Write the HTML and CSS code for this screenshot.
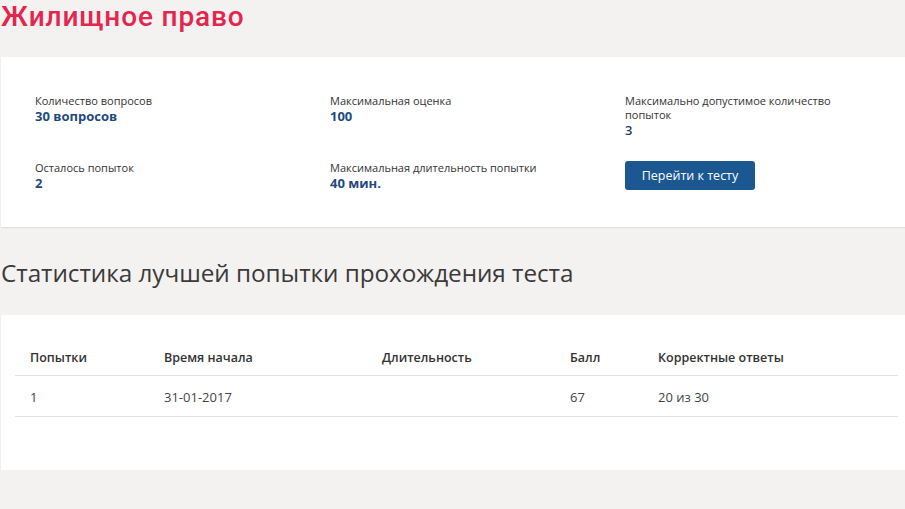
FILE: index.html
```html
<!DOCTYPE html>
<html lang="ru">
<head>
<meta charset="utf-8">
<title>Жилищное право</title>
<link rel="stylesheet" href="styles.css">
</head>
<body>
<h1 class="title">Жилищное право</h1>
<section class="card info">
  <div class="grid">
    <div class="item"><div class="label">Количество вопросов</div><div class="value">30 вопросов</div></div>
    <div class="item"><div class="label">Максимальная оценка</div><div class="value">100</div></div>
    <div class="item wrap"><div class="label">Максимально допустимое количество попыток</div><div class="value plain">3</div></div>
    <div class="item"><div class="label">Осталось попыток</div><div class="value">2</div></div>
    <div class="item"><div class="label">Максимальная длительность попытки</div><div class="value">40 мин.</div></div>
    <div class="item"><button class="btn">Перейти к тесту</button></div>
  </div>
</section>
<h2 class="subtitle">Статистика лучшей попытки прохождения теста</h2>
<section class="card stats">
  <table class="table">
    <colgroup>
      <col class="c1"><col class="c2"><col class="c3"><col class="c4"><col class="c5">
    </colgroup>
    <thead>
      <tr><th>Попытки</th><th>Время начала</th><th>Длительность</th><th>Балл</th><th>Корректные ответы</th></tr>
    </thead>
    <tbody>
      <tr><td>1</td><td>31-01-2017</td><td></td><td>67</td><td>20 из 30</td></tr>
    </tbody>
  </table>
</section>
</body>
</html>
```
FILE: styles.css
```css
html, body {
  margin: 0;
  padding: 0;
}
body {
  background: #f4f1f1;
  font-family: "Open Sans", "Noto Sans", sans-serif;
  color: #333;
}
.title {
  margin: 0;
  padding: 0 0 0 1px;
  font-family: Roboto, "Open Sans", sans-serif;
  font-size: 28px;
  font-weight: 500;
  line-height: 33px;
  color: #e2264d;
  letter-spacing: 0.85px;
}
.card {
  background: #fff;
  margin-left: 1px;
  box-shadow: 0 1px 1px rgba(0,0,0,0.08);
}
.info {
  margin-top: 24px;
  padding: 37px 0 36px 34px;
}
.grid {
  display: grid;
  grid-template-columns: 295px 295px 230px;
  row-gap: 23px;
}
.label {
  font-size: 11px;
  line-height: 14px;
  color: #333;
}
.value {
  font-size: 13px;
  font-weight: 700;
  line-height: 16px;
  color: #1f4a7e;
}
.value.plain {
  font-weight: 600;
  color: #1f3d63;
}
.btn {
  display: block;
  width: 130px;
  height: 29px;
  border: 0;
  border-radius: 3px;
  background: #1b5791;
  color: #fff;
  font-family: "Open Sans", sans-serif;
  font-size: 12.5px;
  padding: 0;
  cursor: pointer;
}
.subtitle {
  margin: 0;
  padding: 30px 0 0 1px;
  font-size: 24.3px;
  font-weight: 400;
  line-height: 32px;
  color: #3a3a3a;
  box-sizing: border-box;
  height: 88px;
  letter-spacing: -0.05px;
}
.stats {
  padding: 24px 7px 53px 14px;
}
.table {
  width: 100%;
  border-collapse: collapse;
  table-layout: fixed;
  font-size: 13px;
}
.c1 { width: 134px; }
.c2 { width: 218px; }
.c3 { width: 188px; }
.c4 { width: 88px; }
.table th {
  text-align: left;
  font-weight: 600;
  font-size: 12.5px;
  color: #333;
  padding: 9px 15px 7px;
  line-height: 20px;
  border-bottom: 1px solid #e2e2e2;
}
.table td {
  padding: 11px 15px 9px;
  line-height: 20px;
  color: #444;
  border-bottom: 1px solid #e2e2e2;
}
```
